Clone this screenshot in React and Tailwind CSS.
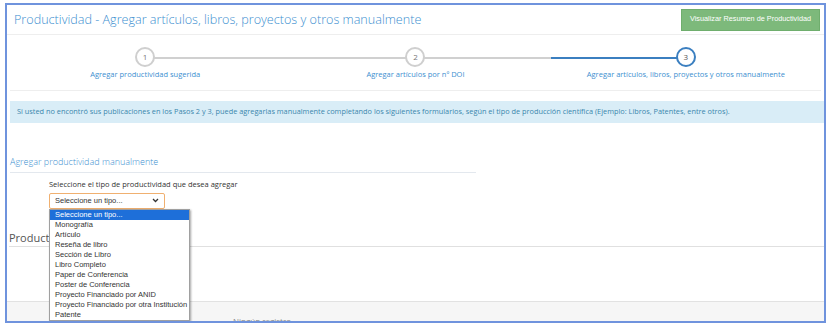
import React from "react";

const steps = [
  { n: 1, label: "Agregar productividad sugerida" },
  { n: 2, label: "Agregar artículos por nº DOI" },
  { n: 3, label: "Agregar artículos, libros, proyectos y otros manualmente", active: true },
];

const options = [
  "Seleccione un tipo...",
  "Monografía",
  "Artículo",
  "Reseña de libro",
  "Sección de Libro",
  "Libro Completo",
  "Paper de Conferencia",
  "Poster de Conferencia",
  "Proyecto Financiado por ANID",
  "Proyecto Financiado por otra Institución",
  "Patente",
];

function Step({ step, index }) {
  return (
    <div className="relative flex flex-col items-center">
      {/* connector halves */}
      {index > 0 && (
        <div
          className={`absolute top-[10px] left-0 right-1/2 h-[2px] ${
            step.active ? "bg-[#3b7fc0]" : "bg-[#d0d0d0]"
          }`}
        />
      )}
      {index < steps.length - 1 && (
        <div className="absolute top-[10px] left-1/2 right-0 h-[2px] bg-[#d0d0d0]" />
      )}
      <div
        className={`relative z-10 w-[20px] h-[20px] rounded-full bg-white flex items-center justify-center text-[8px] ${
          step.active
            ? "border-[2.5px] border-[#3b7fc0] text-[#555]"
            : "border-2 border-[#cfcfcf] text-[#777]"
        }`}
      >
        {step.n}
      </div>
      <span className="mt-[2px] text-[7.5px] text-[#3d8fd0]">{step.label}</span>
    </div>
  );
}

export default function App() {
  return (
    <div
      className="w-[832px] h-[328px] bg-white pt-[3px] pl-[5px] overflow-hidden"
      style={{ fontFamily: '"Open Sans", sans-serif' }}
    >
      <div className="relative w-[821px] h-[320px] border-2 border-[#6f93dd] bg-white flex flex-col overflow-hidden">
        {/* Header */}
        <div className="h-[30px] flex items-center justify-between pl-[7px] pr-[4px] border-b border-[#eeeeee]">
          <h1 className="text-[12.6px] font-light text-[#3d8fd0] leading-none mt-[1px]">
            Productividad - Agregar artículos, libros, proyectos y otros manualmente
          </h1>
          <button
            className="h-[22px] w-[139px] bg-[#7db97b] text-white text-[7.3px] border border-[#6fae6d]"
            style={{ fontFamily: '"Liberation Sans", Arial, sans-serif' }}
          >
            Visualizar Resumen de Productividad
          </button>
        </div>

        {/* Steps */}
        <div className="h-[56px] grid grid-cols-3 mx-[3px] pt-[12px] border-b border-[#eeeeee]">
          {steps.map((s, i) => (
            <Step key={s.n} step={s} index={i} />
          ))}
        </div>

        {/* Info */}
        <div className="mt-[10px] ml-[3px] h-[22px] flex items-center px-[7px] bg-[#d9edf7] text-[7.35px] text-[#3a87ad]">
          Si usted no encontró sus publicaciones en los Pasos 2 y 3, puede agregarlas manualmente completando los siguientes formularios, según el tipo de producción científica (Ejemplo: Libros, Patentes, entre otros).
        </div>

        {/* Manual section */}
        <div className="mt-[32px] ml-[3px] w-[466px] border-b border-[#e3e8ee] pb-[3px]">
          <h2 className="text-[9px] font-light text-[#3d8fd0]">Agregar productividad manualmente</h2>
        </div>
        <div className="ml-[42px] mt-[6px] text-[7.5px] text-[#333]">
          Seleccione el tipo de productividad que desea agregar
        </div>
        <div
          className="ml-[42px] mt-[3px] w-[116px] h-[16px] border border-[#f0b070] rounded-[2px] flex items-center justify-between px-[5px] text-[7.5px] text-[#333]"
          style={{ fontFamily: '"Liberation Sans", Arial, sans-serif' }}
        >
          <span>Seleccione un tipo...</span>
          <svg width="7" height="5" viewBox="0 0 7 5" fill="none" stroke="#333" strokeWidth="1.3">
            <path d="M1 1l2.5 2.5L6 1" />
          </svg>
        </div>

        {/* Productividad heading (partially covered) */}
        <div className="mt-[21px] ml-[2px] border-b border-[#e0e0e0] pb-[1px]">
          <h2 className="text-[11px] leading-[15px] text-[#555]">Productividad</h2>
        </div>

        <div className="flex-1" />

        {/* Footer */}
        <div className="h-[20px] bg-[#f6f6f6] border-t border-[#e2e2e2] relative">
          <span className="absolute left-[226px] top-[13px] text-[8px] text-[#888]">Ningún registro</span>
        </div>

        {/* Open dropdown list */}
        <ul
          className="absolute left-[42px] top-[204px] w-[141px] bg-white border border-[#a0a0a0] shadow-[1px_1px_2px_rgba(0,0,0,0.35)] text-[7.5px] text-[#333] leading-[10px] z-20"
          style={{ fontFamily: '"Liberation Sans", Arial, sans-serif' }}
        >
          {options.map((o, i) => (
            <li
              key={o}
              className={`h-[10px] px-[5px] whitespace-nowrap ${i === 0 ? "bg-[#1e6fd9] text-white" : ""}`}
            >
              {o}
            </li>
          ))}
        </ul>
      </div>
    </div>
  );
}
